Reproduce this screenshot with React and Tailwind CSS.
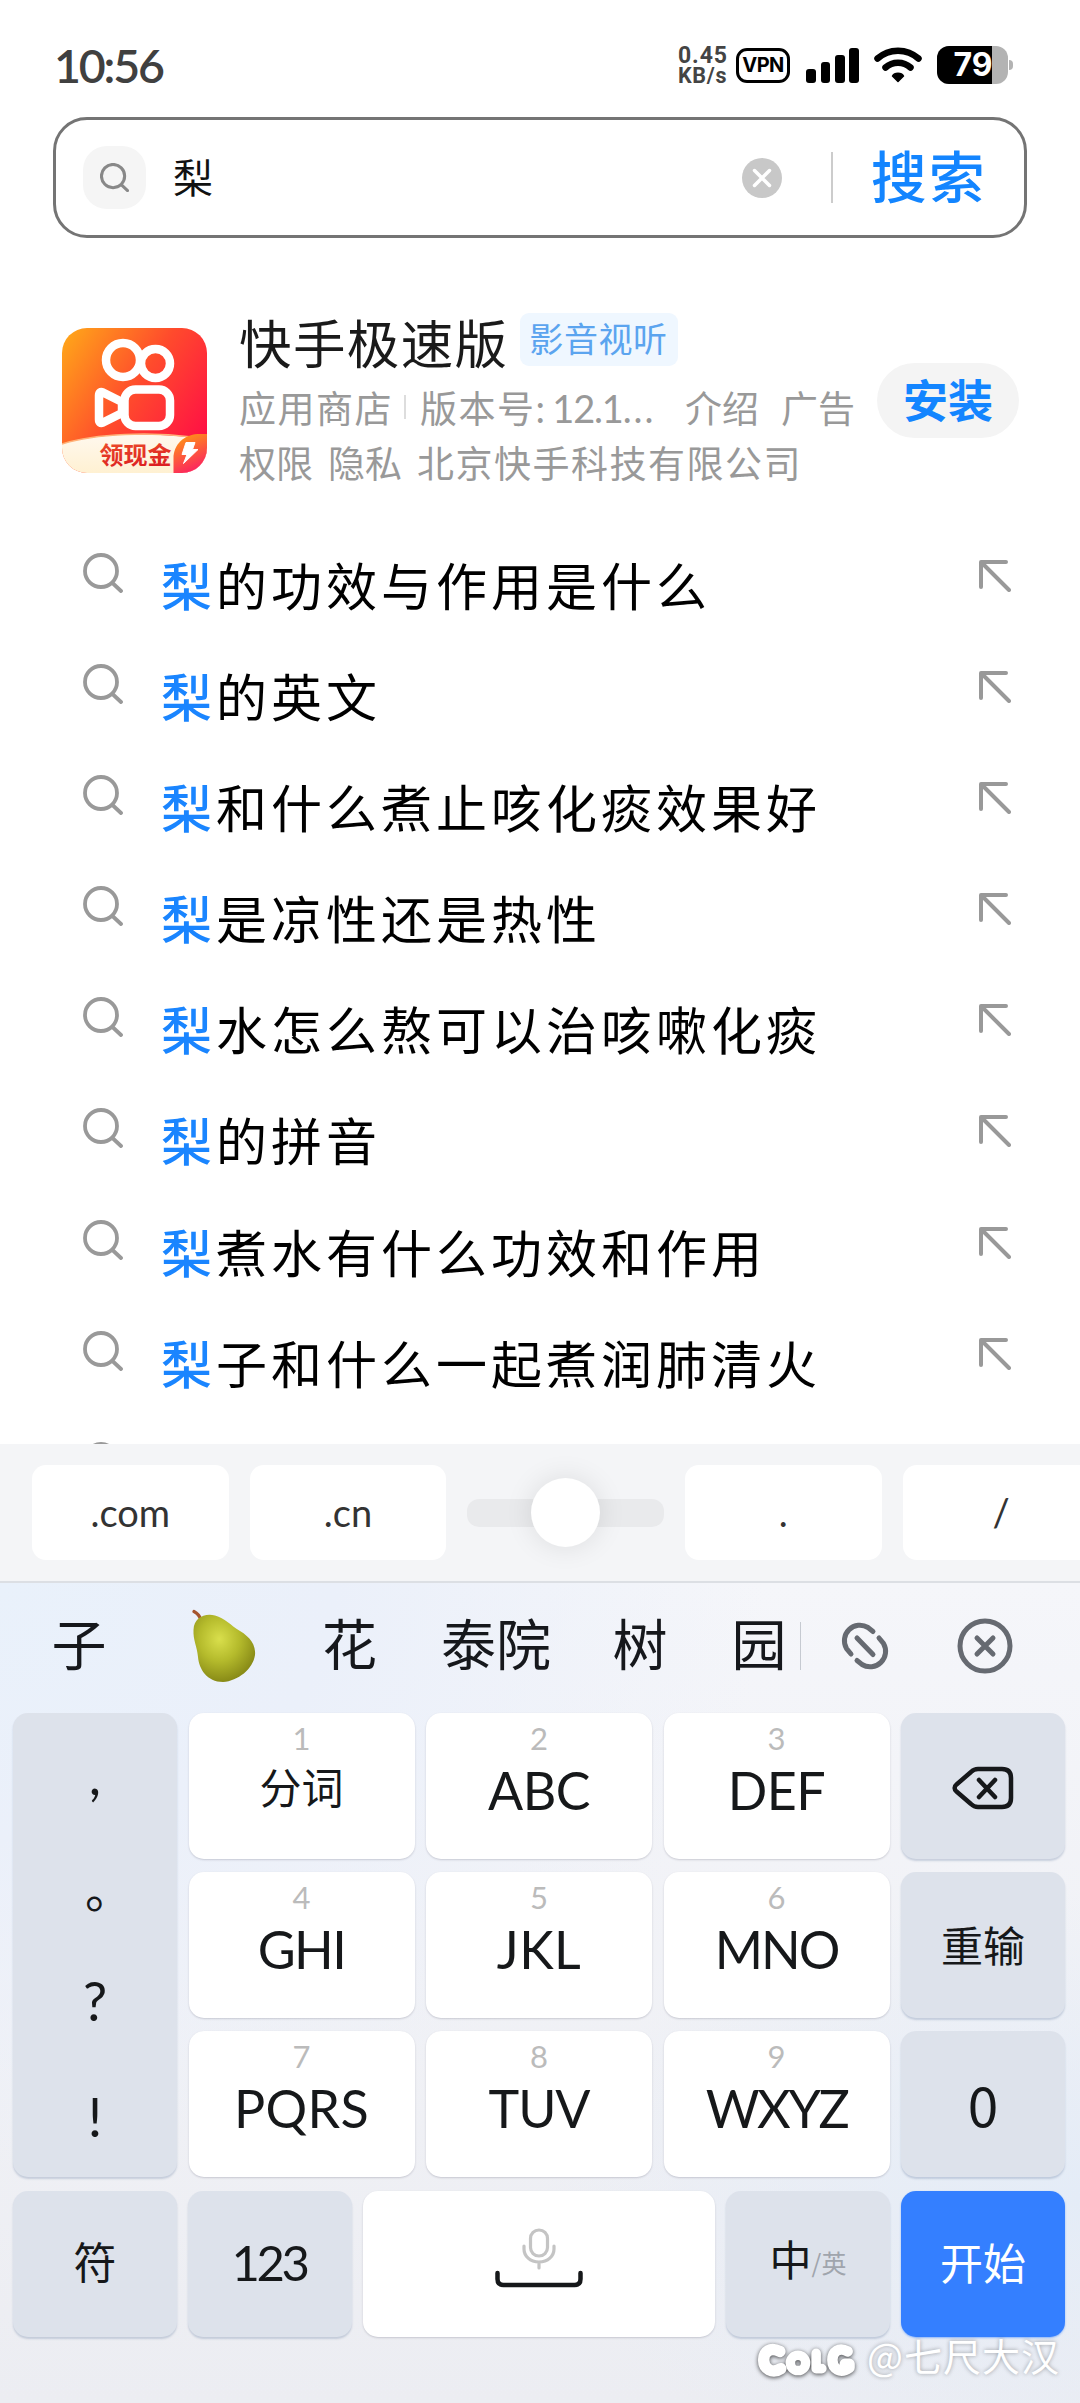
const CJK = "font-['Noto_Sans_CJK_SC',sans-serif]";
const LATIN = "font-['Lato','Noto_Sans_CJK_SC',sans-serif]";

const suggestions = [
  '的功效与作用是什么',
  '的英文',
  '和什么煮止咳化痰效果好',
  '是凉性还是热性',
  '水怎么熬可以治咳嗽化痰',
  '的拼音',
  '煮水有什么功效和作用',
  '子和什么一起煮润肺清火',
];

const letterKeys = [
  { num: '1', label: '分词', cjk: true },
  { num: '2', label: 'ABC', tracking: 'tracking-[-0.5px]' },
  { num: '3', label: 'DEF', tracking: 'tracking-[-0.5px]' },
  { num: '4', label: 'GHI', tracking: 'tracking-[-1.5px]' },
  { num: '5', label: 'JKL', tracking: 'tracking-[0.5px]' },
  { num: '6', label: 'MNO', tracking: 'tracking-[-2px]' },
  { num: '7', label: 'PQRS', tracking: 'tracking-[0.3px]' },
  { num: '8', label: 'TUV', tracking: 'tracking-[-1px]' },
  { num: '9', label: 'WXYZ', tracking: 'tracking-[-2.400px]' },
];

function SearchIcon({ className, strokeWidth = 3.8 }) {
  return (
    <svg viewBox="0 0 40 40" className={className} fill="none" stroke="currentColor" strokeWidth={strokeWidth} strokeLinecap="round">
      <circle cx="18" cy="18" r="16" />
      <path d="M30 30.5 38 38" />
    </svg>
  );
}

function StatusBar() {
  return (
    <div className="flex h-[117px] shrink-0 justify-between pl-[54px] pr-[67px] pt-[41px]">
      <div className={`${LATIN} h-[48px] text-[46.500px] font-semibold leading-[48px] tracking-[-2.200px] text-[#404040]`}>10:56</div>
      <div className="flex h-[48px] items-center">
        <div className="mr-[9px] flex w-[49px] flex-col pt-[2px] font-['Roboto',sans-serif] font-bold text-[#444]">
          <div className="h-[20px] text-[23px] leading-[20px] tracking-[0.900px]">0.45</div>
          <div className="h-[20px] text-[21.500px] leading-[20px] tracking-[0.7px]">KB/s</div>
        </div>
        <div className="flex h-[35px] w-[54px] items-center justify-center rounded-[11px] border-[3.5px] border-black font-['Inter',sans-serif] text-[20px] font-bold leading-none tracking-[-0.6px]">
          VPN
        </div>
        <div className="ml-[16.500px] flex h-[36px] items-end gap-[4.6px]">
          <div className="h-[14px] w-[9.7px] rounded-[3px] bg-black" />
          <div className="h-[21px] w-[9.7px] rounded-[3px] bg-black" />
          <div className="h-[28px] w-[9.7px] rounded-[3px] bg-black" />
          <div className="h-[35px] w-[9.7px] rounded-[3px] bg-black" />
        </div>
        <svg viewBox="0 0 48 36" className="ml-[15px] h-[36px] w-[48px]" fill="none" stroke="black" strokeWidth="6.5" strokeLinecap="round">
          <path d="M3.5 11.5C15 1 33 1 44.5 11.5" />
          <path d="M11.5 20.5C18.5 14 29.5 14 36.5 20.5" />
          <path d="M18.5 29c2-3.600 9-3.600 11 0L24 34.500Z" fill="black" stroke="black" strokeWidth="1.500" strokeLinejoin="round" />
        </svg>
        <div className="ml-[15px] flex items-center gap-[1px]">
          <div className="relative flex h-[38px] w-[71px] items-center justify-center overflow-hidden rounded-[12px] bg-[#b3b3b3]">
            <div className="absolute inset-y-0 left-0 w-[55px] bg-black" />
            <span className="relative pl-[1px] font-['Inter',sans-serif] text-[32px] font-bold leading-none text-white">79</span>
          </div>
          <div className="h-[10px] w-[4px] rounded-r-full bg-[#b3b3b3]" />
        </div>
      </div>
    </div>
  );
}

function SearchBar() {
  return (
    <div className="mx-[53px] flex h-[121px] shrink-0 items-center rounded-[34px] border-[3px] border-[#747474] pl-[27px]">
      <div className="flex size-[63px] items-center justify-center rounded-[24px] bg-[#f5f5f5] text-[#888]">
        <SearchIcon className="size-[29px]" strokeWidth={4.2} />
      </div>
      <div className={`${CJK} ml-[27px] flex-1 pb-[4px] text-[40px] leading-[60px] text-[#111]`}>梨</div>
      <svg viewBox="0 0 40 40" className="size-[40px]">
        <circle cx="20" cy="20" r="20" fill="#c8c8c8" />
        <path d="M12.500 12.500 27.500 27.500M27.500 12.500 12.500 27.500" stroke="white" strokeWidth="3.500" strokeLinecap="round" />
      </svg>
      <div className="ml-[49px] h-[51px] w-[2.500px] bg-[#ccc]" />
      <div className={`${CJK} ml-[38px] w-[153px] pb-[7px] text-[55.500px] font-medium leading-[70px] tracking-[2.500px] text-[#1385ff]`}>搜索</div>
    </div>
  );
}

function AppLogo() {
  return (
    <svg viewBox="0 0 145 145" className="mt-[16px] size-[145px] shrink-0">
      <defs>
        <linearGradient id="logo" x1="0" y1="0.1" x2="1" y2="0.75">
          <stop offset="0" stopColor="#ffa31a" />
          <stop offset="0.5" stopColor="#ff4b2c" />
          <stop offset="1" stopColor="#ff0f45" />
        </linearGradient>
        <linearGradient id="cream" x1="0" y1="0" x2="0" y2="1">
          <stop offset="0" stopColor="#fff8ee" />
          <stop offset="1" stopColor="#fff1d2" />
        </linearGradient>
        <linearGradient id="leaf" x1="0.2" y1="0" x2="0.6" y2="1">
          <stop offset="0" stopColor="#ff9a12" />
          <stop offset="1" stopColor="#fb1f62" />
        </linearGradient>
        <linearGradient id="cash" x1="0" y1="0" x2="0.3" y2="1">
          <stop offset="0" stopColor="#f0562c" />
          <stop offset="1" stopColor="#dc1f22" />
        </linearGradient>
        <clipPath id="tile">
          <rect width="145" height="145" rx="25" />
        </clipPath>
      </defs>
      <g clipPath="url(#tile)">
        <rect width="145" height="145" fill="url(#logo)" />
        <g fill="none" stroke="white" strokeWidth="8.500" strokeLinejoin="round">
          <circle cx="61" cy="32" r="17" />
          <circle cx="93.500" cy="35.500" r="14.500" />
          <rect x="62.500" y="61.500" width="45.500" height="36.500" rx="11" />
          <path d="M37 67.500v24c0 3 1.500 4 4 3L60 85V74L41 64.500c-2.500-1-4 0-4 3Z" />
        </g>
        <path d="M0 116C35 105 90 104 145 111V145H0Z" fill="url(#cream)" />
        <path d="M0 116C35 105 90 104 130 109" fill="none" stroke="#ffb37a" strokeWidth="1.500" />
        <text x="37.500" y="135.500" fontSize="24" fontWeight="700" fill="url(#cash)" fontFamily="Noto Sans CJK SC, sans-serif">领现金</text>
        <path d="M111.500 145V128C113 114 124 106 138 106H145V145Z" fill="url(#leaf)" />
        <path d="M124 114.500h9l-2.500 7H136L121.500 135.500l3.500-9h-5Z" fill="white" stroke="white" strokeWidth="1" strokeLinejoin="round" />
      </g>
    </svg>
  );
}

function AppCard() {
  return (
    <div className={`${CJK} box-content flex h-[206px] shrink-0 pl-[62px] pt-[74px] text-[37px] text-[#999]`}>
      <AppLogo />
      <div className="ml-[32px] w-[638px] whitespace-nowrap">
        <div className="flex">
          <span className="pt-[1px] text-[52.500px] leading-[56px] tracking-[1.400px] text-[#1a1a1a]">快手极速版</span>
          <span className="ml-[11px] mt-[1px] flex h-[53px] w-[158px] items-center justify-center rounded-[9px] bg-[#eff7ff] pb-[3px] text-[34px] leading-none tracking-[0.6px] text-[#5ba4ef]">
            影音视听
          </span>
        </div>
        <div className="mt-[11px] flex h-[54px] items-center leading-[54px]">
          <span className="tracking-[1.500px]">应用商店</span>
          <span className="ml-[11px] h-[24px] w-[2px] bg-[#ddd]" />
          <span className="ml-[14px] w-[265px]">
            <span className="tracking-[1.500px]">版本号</span>
            <span className={`${LATIN} text-[38px] tracking-[-1.200px]`}>: 12.1<span className="tracking-[2px]">...</span></span>
          </span>
          <span>介绍</span>
          <span className="ml-[22px]">广告</span>
        </div>
        <div className="mt-[1px] flex h-[54px] leading-[54px]">
          <span>权限</span>
          <span className="ml-[15px]">隐私</span>
          <span className="ml-[15px] tracking-[1.500px]">北京快手科技有限公司</span>
        </div>
      </div>
      <div className="mt-[51px] flex h-[75px] w-[142px] items-center justify-center rounded-full bg-[#f4f4f4] pb-[5px] text-[45px] font-bold leading-none text-[#1385ff]">
        安装
      </div>
    </div>
  );
}

function SuggestionRow({ text }) {
  return (
    <div className="flex h-[111.100px] shrink-0 items-start pl-[83px] pr-[69px] pt-[35px]">
      <SearchIcon className="size-[40px] shrink-0 text-[#999]" />
      <div className={`${CJK} -mt-[7px] ml-[38px] flex-1 whitespace-nowrap text-[51px] leading-[76px] tracking-[4px] text-black`}>
        {text && <span className="font-medium text-[#1a85ff]">梨</span>}
        {text}
      </div>
      {text && (
        <svg viewBox="0 0 32 32" className="mt-[7px] size-[32px]" fill="none" stroke="#999" strokeWidth="4" strokeLinecap="round" strokeLinejoin="round">
          <path d="M2 27V2h25M2.500 2.500 30 30" />
        </svg>
      )}
    </div>
  );
}

function UrlBar() {
  const key = `${LATIN} flex h-[95px] w-[196.500px] shrink-0 items-center justify-center rounded-[14px] bg-white text-[38px] text-[#333]`;
  return (
    <div className="flex h-[139px] shrink-0 items-center gap-[21.200px] overflow-hidden border-b-2 border-[#dcdfe4] bg-[#f4f5f7] pl-[32px]">
      <div className={key}>.com</div>
      <div className={key}>.cn</div>
      <div className="flex h-[28px] w-[196.500px] shrink-0 items-center justify-center rounded-[12px] bg-[#e9eaec]">
        <div className="size-[69px] rounded-full bg-white shadow-[0_0_28px_rgba(0,0,0,0.1)]" />
      </div>
      <div className={key}>.</div>
      <div className={key}>/</div>
    </div>
  );
}

function Pear() {
  return (
    <svg viewBox="0 0 64 74" className="h-[74px] w-[64px]">
      <defs>
        <radialGradient id="pear" cx="0.42" cy="0.36" r="0.65">
          <stop offset="0" stopColor="#d9df4c" />
          <stop offset="0.5" stopColor="#b5bb2c" />
          <stop offset="1" stopColor="#878916" />
        </radialGradient>
      </defs>
      <path d="M2 2.500Q7 5 9 11" fill="none" stroke="#a5552f" strokeWidth="3.200" strokeLinecap="round" />
      <path d="M1.500 21C2 9 12 4 23 6.500 33 9 38 16 48 22 58 28 64 36 63 46 61 60 46 72 31 73 15 73 7 60 6 48 5 37 1 31 1.500 21Z" fill="url(#pear)" />
    </svg>
  );
}

function Candidates() {
  return (
    <div className={`${CJK} flex h-[130px] shrink-0 items-center pb-[5px] text-[55px] leading-none text-[#16181c]`}>
      <span className="w-[158px] pb-[8px] text-center">子</span>
      <span className="flex w-[131px] justify-center"><Pear /></span>
      <span className="w-[121px] pb-[8px] text-center">花</span>
      <span className="w-[172px] pb-[8px] text-center">泰院</span>
      <span className="w-[116px] pb-[8px] text-center">树</span>
      <span className="w-[102px] pb-[8px] pl-[20px] text-center">园</span>
      <span className="h-[48px] w-[1px] bg-[#c6cad1]" />
      <svg viewBox="0 0 52 52" className="ml-[38px] size-[52px]" fill="none" stroke="#666a71" strokeWidth="5" strokeLinecap="round">
        <path d="M12 34 7.500 28.500A15.500 15.500 0 0 1 29 7.500L34 11.500" />
        <path d="M40 18 44.500 23.500A15.500 15.500 0 0 1 23 44.500L18 40.500" />
        <path d="M18 18 34 34.500" />
      </svg>
      <svg viewBox="0 0 56 56" className="ml-[66px] size-[56px]" fill="none" stroke="#666a71" strokeWidth="5" strokeLinecap="round">
        <circle cx="28" cy="28" r="25" />
        <path d="M20 20 36 36M36 20 20 36" />
      </svg>
    </div>
  );
}

const whiteKey = 'rounded-[15px] bg-white shadow-[0_1px_2px_rgba(60,60,80,0.22)]';
const grayKey = 'rounded-[15px] bg-[#dde2eb] shadow-[0_2px_2px_rgba(110,130,165,0.32)]';

function LetterKey({ num, label, cjk, tracking }) {
  return (
    <div className={`${whiteKey} flex flex-col items-center`}>
      <div className={`${LATIN} mt-[9px] h-[32px] text-[31px] leading-[32px] text-[#bbb]`}>{num}</div>
      {cjk ? (
        <div className={`${CJK} mt-[4px] text-[42px] leading-[56px] text-[#16181a]`}>{label}</div>
      ) : (
        <div className={`${LATIN} ${tracking} mt-[8px] text-[52px] leading-[56px] text-[#16181a]`}>{label}</div>
      )}
    </div>
  );
}

function Keyboard() {
  return (
    <div className="flex h-[690px] shrink-0 flex-col gap-[14px] px-[13px] text-[#16181a]">
      <div className="grid h-[464px] grid-cols-[164px_701px_164px] gap-[11.500px]">
        <div className={`${grayKey} ${LATIN} flex flex-col items-center text-[54px] leading-[60px]`}>
          <span className="mt-[32px] h-[60px]">,</span>
          <span className={`${CJK} mt-[52px] h-[60px] w-[46px] pl-[13px] text-[48px]`}>。</span>
          <span className="mt-[54px] h-[60px]">?</span>
          <span className="mt-[56px] h-[60px]">!</span>
        </div>
        <div className="grid grid-cols-3 grid-rows-3 gap-x-[11.500px] gap-y-[13px]">
          {letterKeys.map((k) => (
            <LetterKey key={k.num} {...k} />
          ))}
        </div>
        <div className="grid grid-rows-3 gap-y-[13px]">
          <div className={`${grayKey} flex items-center justify-center`}>
            <svg viewBox="0 0 62 44" className="mt-[3px] h-[44px] w-[62px]" fill="none" stroke="#16181a" strokeWidth="4.500" strokeLinecap="round" strokeLinejoin="round">
              <path d="M26 3H50c6 0 9 3 9 9V32c0 6-3 9-9 9H26c-3 0-5-1-7-3L4.500 25.500c-2.500-2-2.500-5 0-7L19 6c2-2 4-3 7-3Z" />
              <path d="M27 14 43 31M43 14 27 31" />
            </svg>
          </div>
          <div className={`${grayKey} ${CJK} flex items-center justify-center pb-[3px] text-[42px] leading-none`}>重输</div>
          <div className={`${grayKey} ${CJK} flex items-center justify-center pb-[2px] text-[55px] leading-none`}>0</div>
        </div>
      </div>
      <div className="grid h-[146px] grid-cols-[164px_164px_352px_164px_164px] gap-[11px]">
        <div className={`${grayKey} ${CJK} flex items-center justify-center pb-[7px] text-[43px] leading-none`}>符</div>
        <div className={`${grayKey} ${LATIN} flex items-center justify-center pb-[3px] pr-[2px] text-[49px] leading-none tracking-[-3.500px]`}>123</div>
        <div className={`${whiteKey} flex flex-col items-center pt-[37px]`}>
          <svg viewBox="0 0 34 42" className="h-[42px] w-[34px]" fill="none" stroke="#c4c4c4" strokeWidth="3.200" strokeLinecap="round">
            <rect x="8.500" y="2" width="17" height="26" rx="8.500" />
            <path d="M2 18v3c0 7 6 13 15 13s15-6 15-13v-3M17 34v6" />
          </svg>
          <svg viewBox="0 0 88 18" className="h-[18px] w-[88px]" fill="none" stroke="#16181a" strokeWidth="4.500" strokeLinecap="round">
            <path d="M2.500 3v6c0 4 2 6 6 6H79.500c4 0 6-2 6-6V3" />
          </svg>
        </div>
        <div className={`${grayKey} ${CJK} flex items-baseline justify-center pt-[37px] leading-[60px]`}>
          <span className="text-[42px]">中</span>
          <span className="relative -top-[3px] text-[25px] text-[#a0a5ad]">/英</span>
        </div>
        <div className={`${CJK} flex items-center justify-center rounded-[15px] bg-[#347fff] pb-[6px] text-[43px] leading-none text-white shadow-[0_1px_2px_rgba(52,127,255,0.5)]`}>开始</div>
      </div>
    </div>
  );
}

function Watermark() {
  return (
    <div className="absolute right-[20px] top-[2327px] flex items-center text-white">
      <svg viewBox="0 0 110 44" className="mr-[6px] mt-[12px] h-[42px] w-[105px] overflow-visible drop-shadow-[0_1px_2px_rgba(0,0,0,0.7)]">
        <g fill="none" stroke="white" strokeWidth="12" strokeLinecap="round" strokeLinejoin="round">
          <path d="M25 12C15 7 8 12 8 21S17 36 26 30" />
          <circle cx="44" cy="24" r="8" strokeWidth="10" />
          <path d="M63 14V30H69" strokeWidth="10" />
          <path d="M96 12C87 7 80 12 80 21S88 36 98 29V25H93" strokeWidth="11" />
        </g>
      </svg>
      <span className={`${CJK} text-[38px] leading-[56px] tracking-[1px] [text-shadow:0_0_4px_rgba(0,0,0,0.35)]`}>@七尺大汉</span>
    </div>
  );
}

export default function App() {
  return (
    <div className="relative flex h-[2403px] w-[1080px] flex-col overflow-hidden bg-white">
      <StatusBar />
      <SearchBar />
      <AppCard />
      <div className="flex h-[926px] shrink-0 flex-col overflow-hidden">
        {suggestions.map((text) => (
          <SuggestionRow key={text} text={text} />
        ))}
        <SuggestionRow />
      </div>
      <UrlBar />
      <div className="flex flex-1 flex-col bg-[radial-gradient(ellipse_at_0%_0%,#e9f1fb_0%,#ebf0fa_22%,transparent_50%),radial-gradient(ellipse_at_100%_75%,#e4ecf7_0%,transparent_35%),linear-gradient(to_bottom,#f5f6fa,#ecedf2)]">
        <Candidates />
        <Keyboard />
      </div>
      <Watermark />
    </div>
  );
}
